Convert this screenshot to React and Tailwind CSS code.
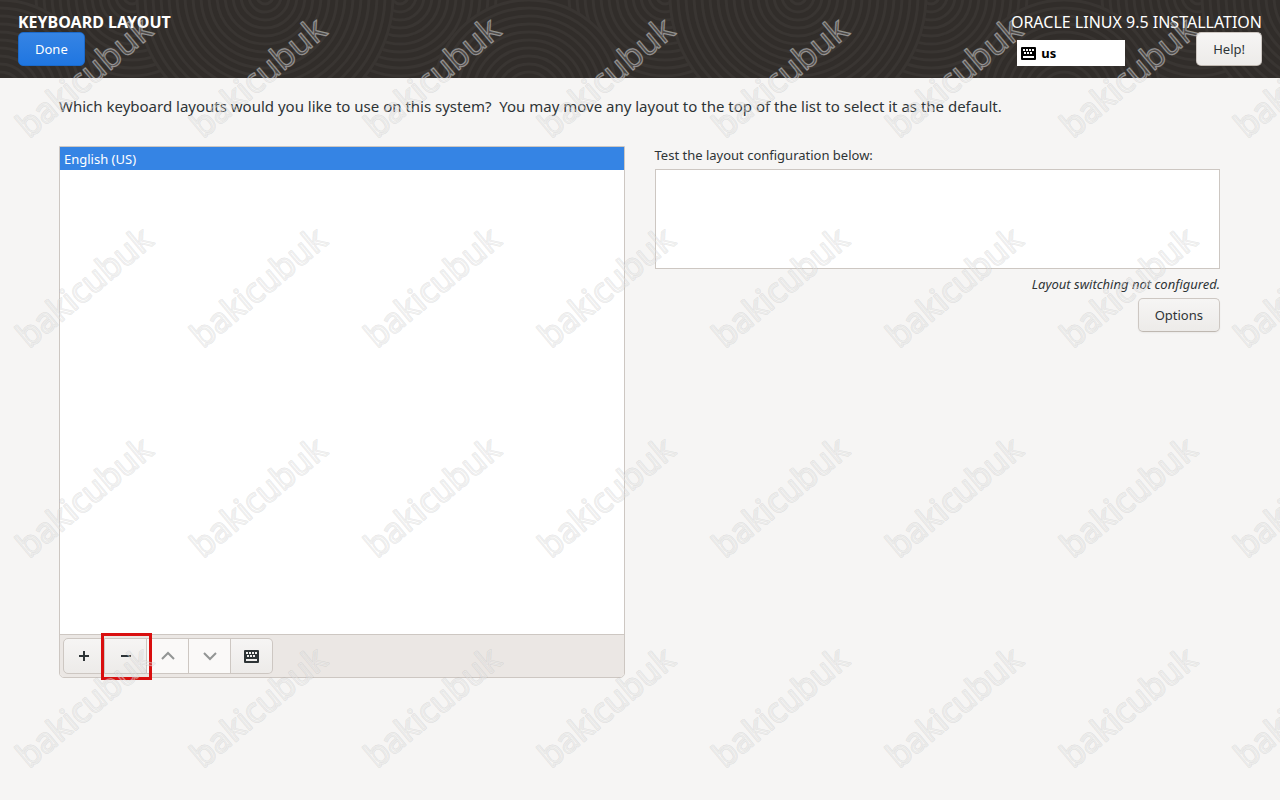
import React from "react";

const WATERMARK_COLS = [0, 1, 2, 3, 4, 5, 6, 7];
const WATERMARK_ROWS = [0, 1, 2, 3];

// Ring groups in the header, later ones cover earlier ones
const RINGS = [
    { x: 132, y: -4, r: 96 },
    { x: 400, y: -4, r: 96 },
    { x: 665, y: -4, r: 96 },
    { x: 931, y: -4, r: 96 },
    { x: 1198, y: -4, r: 96 },
    { x: 0, y: 96, r: 96 },
    { x: 529, y: 96, r: 96 },
    { x: 1064, y: 96, r: 96 },
    { x: 265, y: -4, r: 128 },
    { x: 798, y: -4, r: 128 },
    { x: 1330, y: -4, r: 128 },
];

const HeaderPattern = () => (
    <svg className="absolute inset-0 w-full h-full" aria-hidden="true">
        {RINGS.map((ring) => (
            <g key={ring.x} fill="#312d2a" stroke="#393532" strokeWidth="3">
                {Array.from({ length: ring.r / 8 }, (_, i) => (
                    <circle key={i} cx={ring.x} cy={ring.y} r={ring.r - i * 8} />
                ))}
            </g>
        ))}
    </svg>
);

const Watermark = () => (
    <svg className="absolute inset-0 w-full h-full pointer-events-none z-20" aria-hidden="true">
        <g fontFamily="Noto Sans, sans-serif" fontSize="34" strokeLinejoin="round">
            {WATERMARK_ROWS.map((row) =>
                WATERMARK_COLS.map((col) => (
                    <g key={`${row}-${col}`} transform={`translate(${29 + col * 174} ${139 + row * 210}) rotate(-40)`}>
                        <text fill="none" stroke="#808080" strokeOpacity="0.2" strokeWidth="2">bakicubuk</text>
                        <text fill="#ffffff" fillOpacity="0.12" stroke="#ffffff" strokeOpacity="0.42" strokeWidth="1">bakicubuk</text>
                    </g>
                ))
            )}
        </g>
    </svg>
);

const KeyboardIcon = () => (
    <svg width="16" height="16" viewBox="0 0 16 16" fill="currentColor" aria-hidden="true">
        <path
            fillRule="evenodd"
            d="M1 2h13a1 1 0 0 1 1 1v11a1 1 0 0 1-1 1H1a1 1 0 0 1-1-1V3a1 1 0 0 1 1-1zM2 4v2h2V4zM5 4v2h2V4zM8 4v2h2V4zM11 4v2h2V4zM3 7v2h2V7zM6 7v2h2V7zM9 7v2h2V7zM2 11v2h11v-2z"
        />
    </svg>
);

const Button = ({ children }) => (
    <button className="h-[34px] px-4 rounded-[5px] border border-[#cdc7c2] border-b-[#bfb8b1] bg-linear-to-b from-[#f6f5f4] to-[#edebe9] text-[#2e3436] shadow-xs">
        {children}
    </button>
);

const ToolButton = ({ label, disabled, children }) => (
    <button
        aria-label={label}
        disabled={disabled}
        className="w-[42px] h-9 flex items-center justify-center border-y border-r first:border-l first:rounded-l-[5px] last:rounded-r-[5px] border-[#cdc7c2] text-[#2e3436] bg-linear-to-b from-[#f6f5f4] to-[#edebe9] disabled:bg-none disabled:bg-[#faf9f8] disabled:text-[#929595]"
    >
        {children}
    </button>
);

const Header = () => (
    <header className="relative h-[78px] bg-[#312d2a] overflow-hidden">
        <HeaderPattern />
        <div className="relative flex justify-between px-[18px] pt-3">
            <div>
                <h1 className="text-base leading-5 font-bold text-white">KEYBOARD LAYOUT</h1>
                <button className="h-[34px] px-4 rounded-[5px] border border-[#1b6acb] bg-linear-to-b from-[#3584e4] to-[#1f76e1] text-white">
                    Done
                </button>
            </div>
            <div>
                <div className="text-base leading-5 text-white">ORACLE LINUX 9.5 INSTALLATION</div>
                <div className="flex justify-end items-end gap-[71px]">
                    <div className="w-[108px] h-[26px] px-1 flex items-center gap-1 bg-white text-black font-bold">
                        <KeyboardIcon />
                        us
                    </div>
                    <Button>Help!</Button>
                </div>
            </div>
        </div>
    </header>
);

const App = () => {
    return (
        <div className="relative min-h-screen overflow-hidden bg-[#f6f5f4] text-[#2e3436] text-[13px] leading-5 font-['Noto_Sans',sans-serif]">
            <Header />
            <main className="pl-[59px] pr-[60px] pt-[18px]">
                <p className="text-[15px] leading-5 whitespace-pre-wrap">
                    {"Which keyboard layouts would you like to use on this system?  You may move any layout to the top of the list to select it as the default."}
                </p>
                <div className="grid grid-cols-2 gap-[30px] mt-[30px]">
                    <section className="border border-[#cdc7c2] rounded-b-[5px]">
                        <ul className="h-[487px] bg-white">
                            <li className="h-[23px] px-1 leading-6 bg-[#3584e4] text-white">English (US)</li>
                        </ul>
                        <div className="h-[43px] flex items-center px-[3px] border-t border-[#cdc7c2] bg-[#ebe7e4] rounded-b-[4px]">
                            <div className="relative">
                                <div className="flex">
                                    <ToolButton label="Add layout">
                                        <svg width="16" height="16" stroke="currentColor" strokeWidth="2"><path d="M8 3v10M3 8h10" /></svg>
                                    </ToolButton>
                                    <ToolButton label="Remove layout">
                                        <svg width="16" height="16" stroke="currentColor" strokeWidth="2"><path d="M3 8h10" /></svg>
                                    </ToolButton>
                                    <ToolButton label="Move layout up" disabled>
                                        <svg width="16" height="16" fill="none" stroke="currentColor" strokeWidth="2"><path d="M2 11l6-6 6 6" /></svg>
                                    </ToolButton>
                                    <ToolButton label="Move layout down" disabled>
                                        <svg width="16" height="16" fill="none" stroke="currentColor" strokeWidth="2"><path d="M2 5l6 6 6-6" /></svg>
                                    </ToolButton>
                                    <ToolButton label="Preview layout">
                                        <KeyboardIcon />
                                    </ToolButton>
                                </div>
                                {/* red marker round the remove button */}
                                <div className="absolute left-[38px] -top-[5px] w-[51px] h-[47px] border-3 border-[#d90f0f] pointer-events-none" />
                            </div>
                        </div>
                    </section>
                    <section className="flex flex-col">
                        <label htmlFor="layout-test" className="leading-[18px]">Test the layout configuration below:</label>
                        <textarea id="layout-test" className="w-full h-[100px] mt-[5px] resize-none bg-white border border-[#cdc7c2]" />
                        <div className="flex flex-col items-end mt-[5px] gap-1">
                            <em>Layout switching not configured.</em>
                            <Button>Options</Button>
                        </div>
                    </section>
                </div>
            </main>
            <Watermark />
        </div>
    );
};

export default App;
